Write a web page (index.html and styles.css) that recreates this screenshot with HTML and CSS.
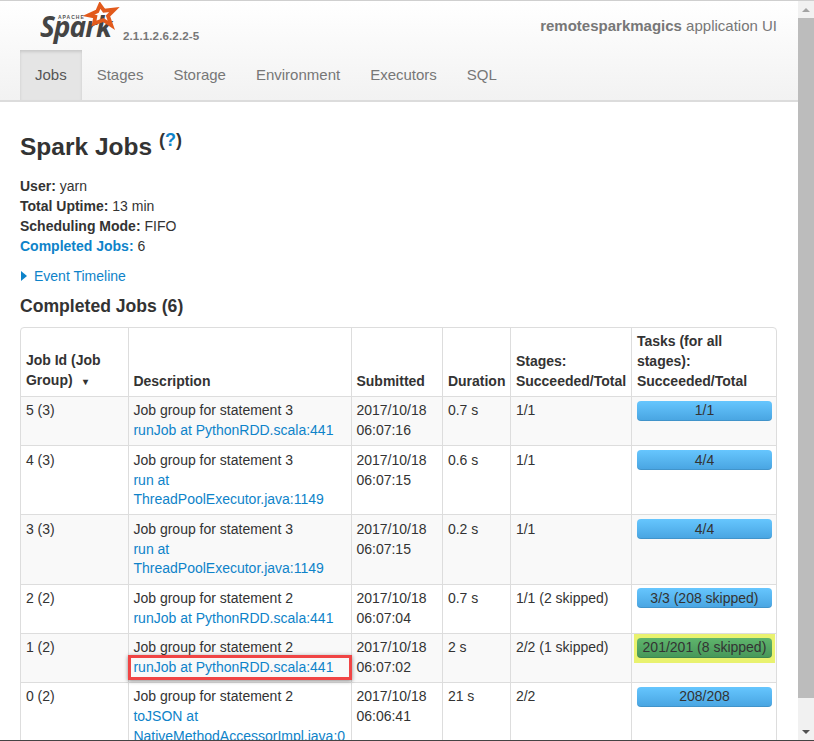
FILE: index.html
```html
<!DOCTYPE html>
<html lang="en">
<head>
<meta charset="utf-8">
<title>Spark Jobs</title>
<link rel="stylesheet" href="styles.css">
</head>
<body>
<div class="window">
  <div class="viewport">
    <header class="navbar">
      <div class="brand-row">
        <div class="brand">
          <svg class="logo" width="84" height="44" viewBox="0 0 84 44" aria-label="Apache Spark">
            <text class="logo-apache" x="18" y="17">APACHE</text>
            <text class="logo-spark" x="0" y="35">Spark</text>
            <path class="star" d="M60 3 L64 8.700 L74.500 7.500 L68 14 L71.300 23.300 L63.300 18 L54 21.500 L55.300 14.700 L48.500 13.300 L57.300 9.300 Z"/>
          </svg>
          <span class="version">2.1.1.2.6.2.2-5</span>
        </div>
        <p class="app-name"><strong>remotesparkmagics</strong> application UI</p>
      </div>
      <nav class="tabs">
        <a class="tab active">Jobs</a>
        <a class="tab">Stages</a>
        <a class="tab">Storage</a>
        <a class="tab">Environment</a>
        <a class="tab">Executors</a>
        <a class="tab">SQL</a>
      </nav>
    </header>
    <main class="content">
      <h1 class="title">Spark Jobs <sup class="help">(<a>?</a>)</sup></h1>
      <ul class="summary">
        <li><strong>User:</strong> yarn</li>
        <li><strong>Total Uptime:</strong> 13 min</li>
        <li><strong>Scheduling Mode:</strong> FIFO</li>
        <li><a class="strong-link">Completed Jobs:</a> 6</li>
      </ul>
      <div class="timeline"><span class="arrow"></span><a>Event Timeline</a></div>
      <h2 class="subtitle">Completed Jobs (6)</h2>
      <div class="table-frame">
        <table class="jobs">
          <colgroup>
            <col class="c1"><col class="c2"><col class="c3"><col class="c4"><col class="c5"><col class="c6">
          </colgroup>
          <thead>
            <tr>
              <th>Job Id (Job Group) <span class="sort">▾</span></th>
              <th>Description</th>
              <th>Submitted</th>
              <th>Duration</th>
              <th>Stages: Succeeded/Total</th>
              <th>Tasks (for all stages): Succeeded/Total</th>
            </tr>
          </thead>
          <tbody>
            <tr class="odd">
              <td>5 (3)</td>
              <td>Job group for statement 3<br><a>runJob at PythonRDD.scala:441</a></td>
              <td>2017/10/18 06:07:16</td>
              <td>0.7 s</td>
              <td>1/1</td>
              <td><div class="bar">1/1</div></td>
            </tr>
            <tr>
              <td>4 (3)</td>
              <td>Job group for statement 3<br><a>run at<br>ThreadPoolExecutor.java:1149</a></td>
              <td>2017/10/18 06:07:15</td>
              <td>0.6 s</td>
              <td>1/1</td>
              <td><div class="bar">4/4</div></td>
            </tr>
            <tr class="odd">
              <td>3 (3)</td>
              <td>Job group for statement 3<br><a>run at<br>ThreadPoolExecutor.java:1149</a></td>
              <td>2017/10/18 06:07:15</td>
              <td>0.2 s</td>
              <td>1/1</td>
              <td><div class="bar">4/4</div></td>
            </tr>
            <tr>
              <td>2 (2)</td>
              <td>Job group for statement 2<br><a>runJob at PythonRDD.scala:441</a></td>
              <td>2017/10/18 06:07:04</td>
              <td>0.7 s</td>
              <td>1/1 (2 skipped)</td>
              <td><div class="bar">3/3 (208 skipped)</div></td>
            </tr>
            <tr class="odd">
              <td>1 (2)</td>
              <td>Job group for statement 2<br><a class="boxed">runJob at PythonRDD.scala:441</a></td>
              <td>2017/10/18 06:07:02</td>
              <td>2 s</td>
              <td>2/2 (1 skipped)</td>
              <td><div class="marker"><div class="bar green">201/201 (8 skipped)</div></div></td>
            </tr>
            <tr>
              <td>0 (2)</td>
              <td>Job group for statement 2<br><a>toJSON at<br>NativeMethodAccessorImpl.java:0</a></td>
              <td>2017/10/18 06:06:41</td>
              <td>21 s</td>
              <td>2/2</td>
              <td><div class="bar">208/208</div></td>
            </tr>
          </tbody>
        </table>
      </div>
    </main>
  </div>
  <div class="scrollbar">
    <span class="sb-btn up"></span>
    <div class="sb-track"><div class="sb-thumb"></div></div>
    <span class="sb-btn down"></span>
  </div>
</div>
</body>
</html>
```

FILE: styles.css
```css
* { box-sizing: border-box; }
html, body { margin: 0; height: 100%; overflow: hidden; background: #fff; }
body {
  font-family: "Liberation Sans", Arial, sans-serif;
  font-size: 14px;
  line-height: 19.800px;
  color: #333;
}
a { color: #0e83c9; text-decoration: none; }

.window {
  display: flex;
  height: 741px;
  border-top: 1px solid #cfcfcf;
  border-bottom: 1px solid #444;
}
.viewport { flex: 1; min-width: 0; overflow: hidden; }

.navbar {
  height: 101px;
  background: linear-gradient(#fff, #f2f2f2);
  border-bottom: 2px solid #dcdcdc;
  padding: 0 21px 0 20px;
}
.brand-row {
  height: 49px;
  display: flex;
  justify-content: space-between;
  align-items: flex-start;
}
.brand { display: flex; align-items: flex-start; padding-left: 20px; }
.logo { display: block; margin-top: 1px; }
.star { fill: none; stroke: #e25a1c; stroke-width: 3.800; stroke-linejoin: miter; }
.logo-apache { font: bold 5px "Liberation Sans", sans-serif; letter-spacing: 1px; fill: #555; }
.logo-spark { font: italic 700 28px "Open Sans", sans-serif; letter-spacing: -1px; fill: #444; }
.version { font-size: 11.600px; font-weight: bold; color: #777; margin: 25px 0 0 -1px; letter-spacing: .1px; }
.app-name { margin: 15px 0 0; font-size: 15px; color: #777; }

.tabs { display: flex; height: 50px; }
.tab {
  padding: 15px 15px 0;
  font-size: 15px;
  color: #777;
}
.tab.active {
  color: #555;
  background: #e5e5e5;
  box-shadow: inset 0 2px 3px rgba(0, 0, 0, .12);
}

.content { padding: 0 20px; }
.title { margin: 30px 0 0; font-size: 24.500px; line-height: 30px; color: #333; }
.help { font-size: 18px; line-height: 0; vertical-align: 9px; font-weight: bold; }
.summary { list-style: none; margin: 14px 0 0; padding: 0; line-height: 20px; }
.strong-link { font-weight: bold; }
.timeline { margin-top: 10px; display: flex; align-items: center; gap: 7px; line-height: 20px; }
.arrow {
  width: 0; height: 0;
  border-left: 6px solid #0e83c9;
  border-top: 5px solid transparent;
  border-bottom: 5px solid transparent;
  margin-left: 1px;
}
.subtitle { margin: 10px 0 11px; font-size: 17.600px; line-height: 20px; color: #333; }

.table-frame {
  width: 757px;
  border: 1px solid #ddd;
  border-radius: 4px;
  overflow: hidden;
  margin-bottom: 40px;
}
.jobs { width: 100%; border-collapse: collapse; table-layout: fixed; }
.c1 { width: 107px; }
.c2 { width: 223px; }
.c3 { width: 91px; }
.c4 { width: 68px; }
.c5 { width: 121px; }
.jobs th, .jobs td {
  padding: 4.350px 4.950px;
  border: 1px solid #ddd;
  border-width: 1px 0 0 1px;
  vertical-align: top;
  text-align: left;
}
.jobs th:first-child, .jobs td:first-child { border-left: 0; }
.jobs th:nth-child(n+4), .jobs td:nth-child(n+4) { padding-left: 5.400px; }
.jobs th:last-child, .jobs td:last-child { padding-right: 4px; }
.jobs thead tr:first-child th { border-top: 0; }
.jobs th { vertical-align: bottom; font-weight: bold; }
.jobs tr.odd td { background: #f9f9f9; }
.sort { font-size: 10px; margin-left: 7px; }

.bar {
  height: 20px;
  margin-top: -.600px;
  padding-top: .600px;
  border-radius: 4px;
  text-align: center;
  background: linear-gradient(#66c6fe, #48a4e1);
  box-shadow: inset 0 -1px 0 rgba(0, 0, 0, .1);
  color: #333;
}
.bar.green { background: linear-gradient(#5fb56c, #469659); }
.marker {
  margin: -4.350px -3px -4px -3px;
  padding: 4.350px 3px 5px 3px;
  background: #e9f26f;
}
.boxed { display: block; position: relative; }
.boxed::after {
  content: "";
  position: absolute;
  left: -5px; right: -6px; top: -3px; bottom: -2px;
  border: 3px solid #f04545;
  box-shadow: 0 1px 4px rgba(0, 0, 0, .45);
}

.scrollbar {
  flex: 0 0 16px;
  display: flex;
  flex-direction: column;
  background: #f1f1f1;
}
.sb-btn { flex: 0 0 17px; display: flex; align-items: center; justify-content: center; }
.sb-btn::before {
  content: "";
  border-left: 4px solid transparent;
  border-right: 4px solid transparent;
}
.up::before { border-bottom: 4px solid #a3a3a3; }
.down::before { border-top: 4px solid #505050; }
.sb-track { flex: 1; }
.sb-thumb { height: 680px; background: #bcbcbc; }
```
